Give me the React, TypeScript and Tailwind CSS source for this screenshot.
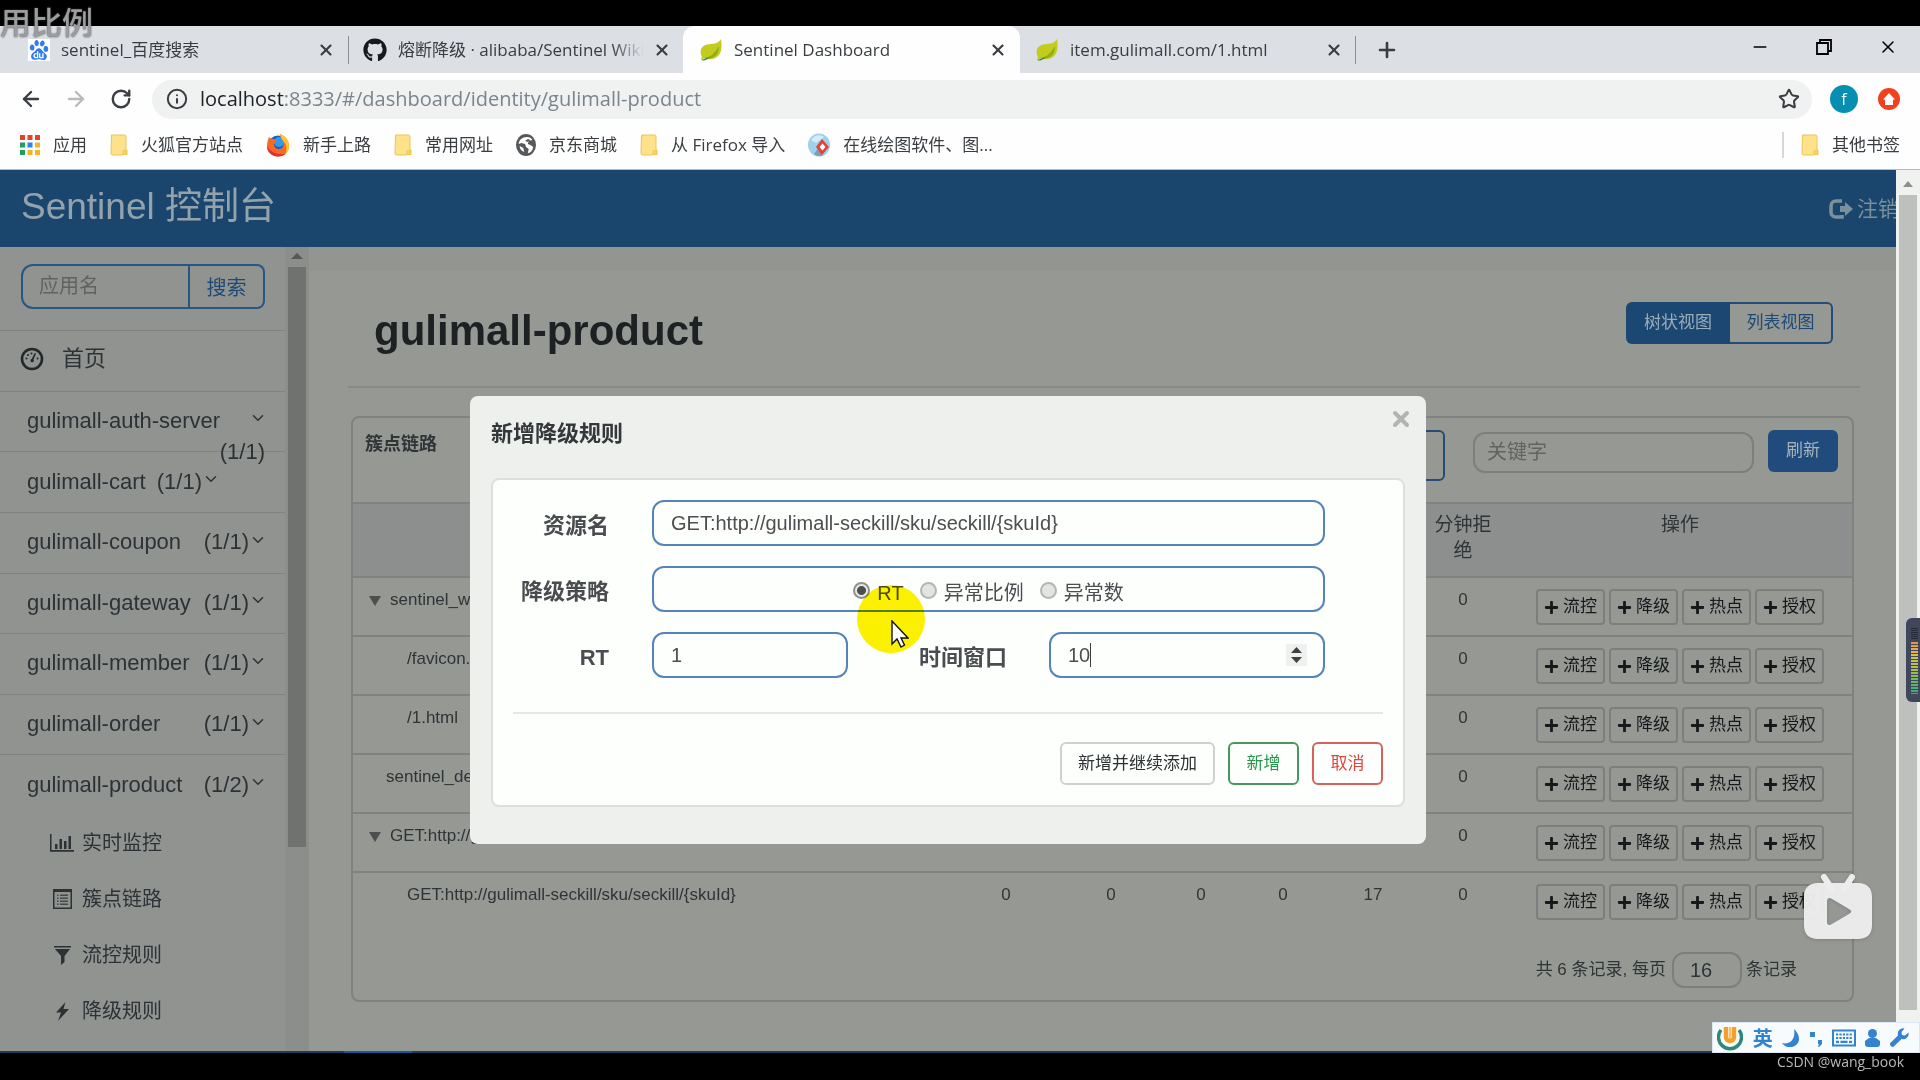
import type { ReactNode } from "react";
import { ArrowLeft, ArrowRight, ChevronDown, Info, Minus, Plus, RotateCw, Star, X } from "lucide-react";
import { FaGithub, FaPlus } from "react-icons/fa";
import { SiBaidu } from "react-icons/si";

const services = [
  { name: "gulimall-auth-server", count: "(1/1)" },
  { name: "gulimall-cart", count: "(1/1)" },
  { name: "gulimall-coupon", count: "(1/1)" },
  { name: "gulimall-gateway", count: "(1/1)" },
  { name: "gulimall-member", count: "(1/1)" },
  { name: "gulimall-order", count: "(1/1)" },
  { name: "gulimall-product", count: "(1/2)" },
];

const columns = [
  { label: "通过QPS", width: "w-[104px]" },
  { label: "拒绝QPS", width: "w-[106px]" },
  { label: "并发数", width: "w-[74px]" },
  { label: "平均RT", width: "w-[90px]" },
  { label: "分钟通过", width: "w-[90px]" },
  { label: "分钟拒绝", width: "w-[90px]" },
];

const resources = [
  { name: "sentinel_web_servlet_context", indent: "pl-4", open: true, values: [0, 0, 0, 0, 17, 0] },
  { name: "/favicon.ico", indent: "pl-[54px]", open: false, values: [0, 0, 0, 0, 0, 0] },
  { name: "/1.html", indent: "pl-[54px]", open: false, values: [0, 0, 0, 0, 0, 0] },
  { name: "sentinel_default_context", indent: "pl-[33px]", open: false, values: [0, 0, 0, 0, 0, 0] },
  { name: "GET:http://gulimall-seckill", indent: "pl-4", open: true, values: [0, 0, 0, 0, 17, 0] },
  { name: "GET:http://gulimall-seckill/sku/seckill/{skuId}", indent: "pl-[54px]", open: false, values: [0, 0, 0, 0, 17, 0] },
];

const actions = ["流控", "降级", "热点", "授权"];

const LeafIcon = () => (
  <svg className="h-6 w-6 shrink-0" viewBox="0 0 24 24">
    <path d="M22 1c1 7 1 13-3 17-4 4-10 4-14 2l-2 2-1-1 1-2C0 13 2 8 8 6.500c5-1 11 0 14-5.500z" fill="#c3cc1c" />
    <path d="M4 20C9 20 15 17 20 8c0 6-2 9-5 11-4 2-8 2-11 1z" fill="#8fae1b" />
    <path d="M2 22c4-1 6-2 9-3-3 3-6 4-9 3z" fill="#1f8a4c" />
  </svg>
);

const FolderIcon = () => (
  <svg className="h-6 w-[18px] shrink-0" viewBox="0 0 18 24">
    <path d="M1.500 2h13a1.500 1.500 0 011.500 1.500V17h1v4.500h-4V22H2.500A1.500 1.500 0 011 20.500z" fill="#fde28a" stroke="#ecc35a" />
    <path d="M13 17.500h3.500v4H13z" fill="#fbd64d" stroke="#ecc35a" strokeWidth=".7" />
  </svg>
);

const AppsIcon = () => (
  <svg className="h-5 w-5 shrink-0" viewBox="0 0 20 20">
    <path d="M0 0h5v5H0zM7.500 0h5v5h-5zM15 0h5v5h-5z" fill="#e8402f" />
    <path d="M0 7.500h5v5H0z" fill="#1fa05a" />
    <path d="M7.500 7.500h5v5h-5z" fill="#2f83ea" />
    <path d="M15 7.500h5v5h-5zM7.500 15h5v5h-5zM15 15h5v5h-5z" fill="#f5b324" />
    <path d="M0 15h5v5H0z" fill="#1fa05a" />
  </svg>
);

const FirefoxIcon = () => (
  <svg className="h-6 w-6 shrink-0" viewBox="0 0 24 24">
    <circle cx="12" cy="12.500" r="10" fill="#2559c4" />
    <circle cx="13" cy="9" r="5" fill="#2f9bea" />
    <path d="M3 4c1 1 2 2 4 2 2 0 3 1 3 2l-2 3c0 4 3 5 5 5 4 0 5-3 4-7-1-4-3-5-3-8 5 2 9 6 9 12 0 6-5 10.500-11 10.500S1 19 1 13c0-4 1-6 2-9z" fill="#fa6a1e" />
    <path d="M14 1c5 2 9 6 9 12 0 3-1 6-4 8 2-4 2-9-1-12-2-3-4-5-4-8z" fill="#fdc62e" />
    <path d="M1 13c0 6 5 10.500 11 10.500 3 0 6-1 8-3-6 2-15 0-19-7.500z" fill="#e22c3f" />
  </svg>
);

const GlobeIcon = () => (
  <svg className="h-[22px] w-5 shrink-0" viewBox="0 0 22 22" preserveAspectRatio="none">
    <circle cx="11" cy="11" r="11" fill="#55595c" />
    <path d="M12 3c3 0 5 1 6 3l-4 1-1 3 3 1 3 2c-1 4-3 6-6 6l1-4-3-2-1-3-4-1-3 1c0-4 4-7 9-7z" fill="#fff" />
    <path d="M13 5l3 1-3 2-3-1z" fill="#55595c" />
    <path d="M4 12l4 2 1 4c-3-1-5-3-5-6z" fill="#fff" />
  </svg>
);

const DrawIcon = () => (
  <svg className="h-6 w-[22px] shrink-0" viewBox="0 0 22 24">
    <ellipse cx="11" cy="12" rx="11" ry="11.500" fill="#9fd0ee" />
    <path d="M3 7c3-5 9-6 13-3L8 10z" fill="#d4ecfa" />
    <path d="M6 21l5-7 4 8c-3 2-7 1-9-1z" fill="#7b9db5" />
    <path d="M14 6l7 8-7 8-6-8z" fill="#e24238" />
    <path d="M14.500 10.500l3 3.500-3 3.500-3-3.500z" fill="#fff" />
  </svg>
);

const GaugeIcon = () => (
  <svg className="h-6 w-6 shrink-0" viewBox="0 0 24 24" fill="#23282a">
    <circle cx="12" cy="12" r="10" fill="none" stroke="#23282a" strokeWidth="2.600" />
    <path d="M14.800 6l1.200.5-2.500 6a1.700 1.700 0 11-1.800-.6z" />
    <circle cx="6.500" cy="11.500" r="1" />
    <circle cx="8" cy="8" r="1" />
    <circle cx="11.500" cy="6.500" r="1" />
    <circle cx="17.500" cy="11.500" r="1" />
  </svg>
);

const ChartIcon = () => (
  <svg className="h-[18px] w-6 shrink-0" viewBox="0 0 24 18" fill="#2c3133">
    <path d="M0 0h1.500v16H24v1.700H0zM5 10h2.500v5H5zM9.500 5H12v10H9.500zM14 7h2.500v8H14zM18.500 2H21v13h-2.500z" />
  </svg>
);

const ListIcon = () => (
  <svg className="h-5 w-[19px] shrink-0" viewBox="0 0 19 20" fill="#2c3133">
    <path d="M0 0h19v20H0zM1.500 3v15.500h16V3z" fillRule="evenodd" />
    <path d="M4 5.500h1.500V7H4zM7 5.500h8V7H7zM4 8.500h1.500V10H4zM7 8.500h8V10H7zM4 11.500h1.500V13H4zM7 11.500h8V13H7zM4 14.500h1.500V16H4zM7 14.500h8V16H7z" opacity=".75" />
  </svg>
);

const FilterIcon = () => (
  <svg className="h-[19px] w-[17px] shrink-0" viewBox="0 0 17 19" fill="#2c3133">
    <path d="M0 0h17v1.500H0zM1 3h15l-5.500 7v6L7 19v-9z" />
  </svg>
);

const FlashIcon = () => (
  <svg className="h-[19px] w-[17px] shrink-0" viewBox="0 0 17 19" fill="#2c3133">
    <path d="M11.500 0L2 10.500h5L4 19l11-12H9.500z" />
  </svg>
);

const LogoutIcon = () => (
  <svg className="h-5 w-6 shrink-0" viewBox="0 0 24 20">
    <path d="M13 2H7a5 5 0 00-5 5v6a5 5 0 005 5h6v-2" fill="none" stroke="currentColor" strokeWidth="3.600" />
    <path d="M16 3l8 7-8 7v-4h-5V7h5z" fill="currentColor" />
  </svg>
);

const menu = [
  { label: "实时监控", icon: <ChartIcon /> },
  { label: "簇点链路", icon: <ListIcon /> },
  { label: "流控规则", icon: <FilterIcon /> },
  { label: "降级规则", icon: <FlashIcon /> },
];

const bookmarks = [
  { label: "应用", icon: <AppsIcon /> },
  { label: "火狐官方站点", icon: <FolderIcon /> },
  { label: "新手上路", icon: <FirefoxIcon /> },
  { label: "常用网址", icon: <FolderIcon /> },
  { label: "京东商城", icon: <GlobeIcon /> },
  { label: "从 Firefox 导入", icon: <FolderIcon /> },
  { label: "在线绘图软件、图...", icon: <DrawIcon /> },
];

const Tab = ({ icon, title, className }: { icon: ReactNode; title: string; className: string }) => (
  <div className={`flex h-full items-center ${className}`}>
    {icon}
    <span className="ml-[11px] min-w-0 flex-1 overflow-hidden whitespace-nowrap text-[17px] leading-7 [mask-image:linear-gradient(to_right,#000_calc(100%-32px),transparent)]">
      {title}
    </span>
    <button aria-label="关闭标签页" className="ml-[9px] shrink-0">
      <X className="h-[18px] w-[18px]" strokeWidth={2.8} />
    </button>
  </div>
);

const Browser = () => (
  <header className="shrink-0 bg-[#fdfefd] font-['Open_Sans','Noto_Sans_CJK_SC',sans-serif] text-[#3a3e42]">
    <div className="flex h-[47px] items-center bg-[#dcdfe4]">
      <Tab
        className="w-[348px] pl-7 pr-[13px]"
        title="sentinel_百度搜索"
        icon={
          <span className="flex h-[22px] w-[22px] shrink-0 items-center justify-center bg-white">
            <SiBaidu className="h-5 w-5 text-[#2f7df0]" />
          </span>
        }
      />
      <div className="h-7 w-px bg-[#8d9094]" />
      <Tab
        className="w-[334px] pl-[14px] pr-3"
        title="熔断降级 · alibaba/Sentinel Wiki"
        icon={<FaGithub className="h-6 w-6 shrink-0 text-[#17191c]" />}
      />
      <Tab className="w-[337px] rounded-t-xl bg-[#fdfefd] pl-4 pr-[13px]" title="Sentinel Dashboard" icon={<LeafIcon />} />
      <Tab className="w-[335px] pl-[15px] pr-3" title="item.gulimall.com/1.html" icon={<LeafIcon />} />
      <div className="h-7 w-px bg-[#8d9094]" />
      <button aria-label="新标签页" className="ml-[19px]">
        <Plus className="h-6 w-6" strokeWidth={2.6} />
      </button>
      <div className="ml-auto flex items-center gap-[46px] pb-1.5 pr-[22px] text-black">
        <button aria-label="最小化"><Minus className="h-5 w-5" strokeWidth={1.8} /></button>
        <button aria-label="还原">
          <svg className="h-4 w-4" viewBox="0 0 16 16" fill="none" stroke="currentColor" strokeWidth="1.800">
            <path d="M1 4h11v11H1zM4 4V1h11v11h-3" />
          </svg>
        </button>
        <button aria-label="关闭"><X className="h-5 w-5" strokeWidth={1.8} /></button>
      </div>
    </div>
    <div className="flex h-[52px] items-center pl-[19px] pr-5">
      <button aria-label="后退"><ArrowLeft className="h-6 w-6" strokeWidth={2.4} /></button>
      <button aria-label="前进" className="ml-[21px] text-[#b9bbbd]"><ArrowRight className="h-6 w-6" strokeWidth={2.4} /></button>
      <button aria-label="刷新页面" className="ml-[22px]"><RotateCw className="h-[22px] w-[22px]" strokeWidth={2.6} /></button>
      <div className="ml-5 flex h-[39px] flex-1 items-center rounded-full bg-[#f0f2f2] pl-[14px] pr-3">
        <Info className="h-[22px] w-[22px]" strokeWidth={2.2} />
        <div className="ml-3 flex-1 text-xl leading-6 text-[#7a848c]">
          <span className="text-[#202428]">localhost</span>:8333/#/dashboard/identity/gulimall-product
        </div>
        <button aria-label="收藏"><Star className="h-[22px] w-[22px]" strokeWidth={2.2} /></button>
      </div>
      <button className="ml-[18px] h-7 w-7 rounded-full bg-[#078fb1] text-base leading-6 text-white">f</button>
      <button aria-label="更新" className="ml-5 flex h-[22px] w-[22px] items-center justify-center rounded-full bg-[#f0401c]">
        <svg className="h-3 w-3" viewBox="0 0 12 12"><path d="M6 0l6 6.500h-2V12H2V6.500H0z" fill="#fff" /></svg>
      </button>
    </div>
    <nav className="flex h-[45px] items-center gap-[23px] border-b border-[#b5babf] pb-1 pl-5 pr-5 text-[17px]">
      {bookmarks.map((item) => (
        <a key={item.label} href="#" className="flex items-center gap-[13px] whitespace-nowrap">
          {item.icon}
          {item.label}
        </a>
      ))}
      <a href="#" className="ml-auto flex items-center gap-[13px] border-l-2 border-[#d5d7da] pl-[17px]">
        <FolderIcon />
        其他书签
      </a>
    </nav>
  </header>
);

const Sidebar = () => (
  <aside className="flex w-[309px] shrink-0 overflow-hidden bg-[#919390]">
    <div className="w-[285px] text-[22px] text-[#2c3236]">
      <div className="flex h-[83px] items-start pl-[21px] pt-[17px]">
        <input
          aria-label="应用名"
          placeholder="应用名"
          className="h-[45px] w-[169px] rounded-l-xl border-2 border-[#285680] bg-transparent px-4 text-xl placeholder:text-[#5f6361]"
        />
        <button className="h-[45px] w-[75px] rounded-r-lg border-2 border-l-0 border-[#285680] pt-0.5 text-xl text-[#1d4a77]">搜索</button>
      </div>
      <ul className="grid h-[485px] grid-rows-8">
        <li className="border-t border-[#7f827f]">
          <a href="#" className="flex h-full items-center gap-[18px] pb-1 pl-5">
            <GaugeIcon />
            首页
          </a>
        </li>
        {services.map((service, index) => (
          <li key={service.name} className="border-t border-[#7f827f]">
            <a href="#" className={`relative flex h-full items-center pb-0.5 pl-[27px] ${index === 1 ? "w-[220px]" : "w-[267px]"}`}>
              {service.name}
              {/* the longest name pushes its count onto a second line */}
              <span className={index === 0 ? "absolute right-0.5 top-11 leading-8" : "ml-auto"}>{service.count}</span>
              <ChevronDown className={`mb-1 h-[18px] w-[18px] ${index === 0 ? "ml-auto" : ""}`} strokeWidth={2} />
            </a>
          </li>
        ))}
      </ul>
      <ul className="text-xl">
        {menu.map((item) => (
          <li key={item.label} className="h-14">
            <a href="#" className="flex h-full items-center gap-2 pl-[50px]">
              <span className="flex w-6 justify-center">{item.icon}</span>
              {item.label}
            </a>
          </li>
        ))}
      </ul>
    </div>
    <div className="flex w-6 flex-col items-center bg-[#8c8e8b] pt-[6px]">
      <svg className="h-[6px] w-3" viewBox="0 0 12 6"><path d="M6 0l6 6H0z" fill="#555856" /></svg>
      <div className="mt-2 h-[580px] w-[18px] bg-[#70726f]" />
    </div>
  </aside>
);

const ResourceTable = () => (
  <section className="rounded-lg border-2 border-[#7f827f]">
    <div className="flex h-[84px] items-start pl-3 pr-[14px] pt-3">
      <h2 className="mr-auto text-lg font-bold">簇点链路</h2>
      <select aria-label="机器" className="h-[51px] w-[300px] appearance-none rounded-md border-2 border-[#234c76]" />
      <input
        aria-label="关键字"
        placeholder="关键字"
        className="ml-7 mt-0.5 h-[41px] w-[281px] rounded-xl border-2 border-[#7c7f7d] px-3 text-xl placeholder:text-[#606462]"
      />
      <button className="ml-[14px] h-[42px] w-[70px] rounded-md bg-[#1f4c7c] text-[17px] text-[#a9b3bc]">刷新</button>
    </div>
    <table className="w-full table-fixed text-[17px] leading-[26px]">
      <thead>
        <tr className="h-[74px] border-y-2 border-[#7f827f] bg-[#8d8f8e] align-top text-[19px]">
          <th className="pt-2 font-normal">资源名</th>
          {columns.map((column) => (
            <th key={column.label} className={`px-4 pt-2 font-normal ${column.width}`}>{column.label}</th>
          ))}
          <th className="w-[344px] pt-2 font-normal">操作</th>
        </tr>
      </thead>
      <tbody>
        {resources.map((resource) => (
          <tr key={resource.name} className="h-[59px] border-t-2 border-[#7f827f] align-top">
            <td className={`pt-[9px] ${resource.indent}`}>
              {resource.open && (
                <svg className="mr-[9px] inline h-[10px] w-3" viewBox="0 0 12 10"><path d="M0 0h12L6 10z" fill="#4b4f4d" /></svg>
              )}
              {resource.name}
            </td>
            {resource.values.map((value, index) => (
              <td key={index} className="pt-[9px] text-center">{value}</td>
            ))}
            <td className="pt-[11px]">
              <div className="flex gap-1 pl-7">
                {actions.map((action) => (
                  <button key={action} className="flex h-9 w-[69px] items-center justify-center gap-1 rounded border-2 border-[#7c7f7d] text-[#15191b]">
                    <FaPlus className="h-[15px] w-[15px]" />
                    {action}
                  </button>
                ))}
              </div>
            </td>
          </tr>
        ))}
      </tbody>
    </table>
    <div className="flex h-[69px] items-start justify-end pr-[55px] pt-[21px] text-[17px] leading-9">
      <label htmlFor="page-size">共 6 条记录, 每页</label>
      <input id="page-size" defaultValue="16" className="ml-[6px] mr-1 h-9 w-[70px] rounded-xl border-2 border-[#7c7f7d] pl-4 text-xl" />
      条记录
    </div>
  </section>
);

const fieldClass = "h-[46px] rounded-xl border-2 border-[#5484b8] bg-transparent text-xl text-[#4c4f51]";
const labelClass = "pt-1 text-right text-[22px] font-bold text-[#4a4d4f]";

const RuleDialog = () => (
  <div className="absolute inset-0 flex items-start justify-center pt-[226px]">
    <form className="relative w-[956px] rounded-lg bg-[#eef0ee] px-[21px] pb-[37px] pt-[22px]" role="dialog" aria-labelledby="dialog-title">
      <h2 id="dialog-title" className="text-[22px] font-bold leading-8 text-[#34383a]">新增降级规则</h2>
      <button type="button" aria-label="关闭" className="absolute right-[13px] top-[11px] text-[#b2b4b2]">
        <X className="h-6 w-6" strokeWidth={4} />
      </button>
      <div className="mt-7 rounded-lg border-2 border-[#dddfdd] bg-[#fdfffd] p-5">
        <div className="grid gap-5 pr-[58px]">
          <div className="flex items-center">
            <label htmlFor="resource" className={`mr-[43px] w-[96px] ${labelClass}`}>资源名</label>
            <input id="resource" className={`min-w-0 flex-1 px-[17px] ${fieldClass}`} defaultValue="GET:http://gulimall-seckill/sku/seckill/{skuId}" />
          </div>
          <div className="flex items-center">
            <span className={`mr-[43px] w-[96px] ${labelClass}`}>降级策略</span>
            <div className={`flex flex-1 items-center justify-center gap-4 pt-2 ${fieldClass}`}>
              {["RT", "异常比例", "异常数"].map((label, index) => (
                <label key={label} className="flex items-center gap-[7px]">
                  <input
                    type="radio"
                    name="strategy"
                    defaultChecked={index === 0}
                    className="mb-1.5 h-[17px] w-[17px] appearance-none rounded-full border-2 border-[#b4b6b4] bg-[#e2e4e2] checked:border-[#8f9190] checked:bg-[radial-gradient(circle,#4d4f4e_0_4px,#e9ebe9_5px)]"
                  />
                  {label}
                </label>
              ))}
            </div>
          </div>
          <div className="flex items-center">
            <label htmlFor="rt" className={`mr-[43px] w-[96px] ${labelClass}`}>RT</label>
            <input id="rt" className={`w-[196px] px-[17px] ${fieldClass}`} defaultValue="1" />
            <label htmlFor="window" className={`ml-auto mr-[42px] ${labelClass}`}>时间窗口</label>
            <div className={`flex w-[276px] items-center pl-[17px] pr-4 ${fieldClass}`}>
              <input id="window" inputMode="numeric" className="field-sizing-content" defaultValue="10" />
              <span className="h-6 w-px bg-[#3a3d3f]" />
              <span className="ml-auto flex h-[22px] w-[21px] items-center justify-center bg-[#eff0ef]">
                <svg className="h-4 w-[11px]" viewBox="0 0 11 16"><path d="M5.500 0L11 6H0zM5.500 16L0 10h11z" fill="#3f4243" /></svg>
              </span>
            </div>
          </div>
        </div>
        <div className="mt-[34px] flex justify-end gap-[13px] border-t-2 border-[#e6e8e6] pt-7 text-[17px]">
          <button type="button" className="h-[43px] w-[155px] rounded-md border-2 border-[#cfd1cf] text-[#2d3133]">新增并继续添加</button>
          <button type="submit" className="h-[43px] w-[71px] rounded-md border-2 border-[#439a5c] text-[#27964a]">新增</button>
          <button type="button" className="h-[43px] w-[71px] rounded-md border-2 border-[#d9605d] text-[#dc4643]">取消</button>
        </div>
      </div>
    </form>
    {/* click highlight with the pointer */}
    <svg className="absolute left-[calc(50%-92px)] top-[414px] h-[70px] w-[70px] mix-blend-multiply" viewBox="0 0 70 70">
      <circle cx="35" cy="35" r="34" fill="#fdf000" />
    </svg>
    <svg className="absolute left-[calc(50%-57px)] top-[450px] h-7 w-[18px]" viewBox="0 0 18 28">
      <path d="M1 1v23l5-5 4 8 3.500-2-3.500-7h7z" fill="#fff" stroke="#111" strokeWidth="1.400" />
    </svg>
  </div>
);

const PageScrollbar = () => (
  <div className="relative flex w-6 shrink-0 flex-col items-center bg-[#f0f2f0] pt-[11px]">
    <svg className="h-[6px] w-[10px]" viewBox="0 0 10 6"><path d="M5 0l5 6H0z" fill="#8d8f8d" /></svg>
    <div className="mt-2 h-[815px] w-[18px] bg-[#bec0be]" />
    <div className="absolute right-0 top-[448px] flex h-[84px] w-[14px] flex-col gap-px rounded-l-md bg-[#41475a] pb-2 pl-[5px] pt-[10px]">
      {Array.from({ length: 6 }, (_, i) => <span key={i} className="h-px w-[7px] shrink-0 bg-[#252a36]" />)}
      <span className="mt-0.5 w-[7px] flex-1 bg-[repeating-linear-gradient(to_bottom,transparent_0_2px,#41475a_2px_3px),linear-gradient(to_bottom,#e8943c,#e0c04c_25%,#a5c04e_55%,#32a88c)]" />
    </div>
  </div>
);

const InputMethodBar = () => (
  <div className="absolute bottom-[27px] right-0 flex h-[31px] w-[208px] items-center justify-between border border-[#dbe7f2] bg-[#f8fbfe] pl-1 pr-[10px] text-[#3384d0]">
    <svg className="h-[26px] w-[26px]" viewBox="0 0 26 26" fill="none">
      <path d="M4 5a11.500 11.500 0 1018 0" stroke="#2c8a74" strokeWidth="3.500" />
      <path d="M9 2v10a4 4 0 008 0V2" stroke="#f5a02c" strokeWidth="4.500" />
      <path d="M13 2v12" stroke="#fcc25c" strokeWidth="2" />
    </svg>
    <span className="font-['Noto_Sans_CJK_SC',sans-serif] text-xl font-bold leading-6">英</span>
    <svg className="h-[18px] w-[18px]" viewBox="0 0 18 18" fill="currentColor"><path d="M12 0c7 6 7 16-2 18-4 1-8-1-10-4 7 2 14-3 12-14z" /></svg>
    <svg className="h-[18px] w-3" viewBox="0 0 12 18" fill="currentColor"><path d="M0 3h5v5H0zM8 11h4v4l-3 3H8l1-3H8z" /></svg>
    <svg className="h-[18px] w-6" viewBox="0 0 24 18" fill="none" stroke="currentColor">
      <path d="M1 1.500h22v15H1z" strokeWidth="2" />
      <path d="M4 5.500h16M4 9h16" strokeWidth="2.200" strokeDasharray="2.200 1.200" />
      <path d="M4 12.800h3M8.500 12.800h7M17 12.800h3" strokeWidth="2.200" />
    </svg>
    <svg className="h-[18px] w-[15px]" viewBox="0 0 15 18" fill="currentColor"><circle cx="7.500" cy="4.500" r="4.500" /><path d="M4 9h7l4 3v3c0 2-1 3-3 3H3c-2 0-3-1-3-3v-3z" /></svg>
    <svg className="h-[19px] w-[19px]" viewBox="0 0 19 19" fill="currentColor">
      <path d="M14.500.5a5.500 5.500 0 00-6.500 7L.8 14.500a2.300 2.300 0 003.500 3.500L11.500 11a5.500 5.500 0 007-6.500L15 7.500 12 7l-.5-3z" />
    </svg>
  </div>
);

const App = () => {
  return (
    <div className="relative flex h-screen flex-col overflow-hidden bg-black pb-[27px] pt-[26px] font-['Liberation_Sans','Noto_Sans_CJK_SC',sans-serif] text-[#2f3436]">
      <Browser />
      <div className="flex min-h-0 flex-1">
        <div className="relative flex min-w-0 flex-1 flex-col overflow-hidden bg-[#969894]">
          <header className="flex h-[77px] shrink-0 items-center justify-between overflow-hidden bg-[#1a466e] pb-1 pl-[21px] text-[#94a2ab]">
            <h1 className="text-[37px]">Sentinel 控制台</h1>
            <a href="#" className="-mr-[3px] flex items-center gap-1 whitespace-nowrap pt-1 text-[21px] text-[#7b909a]">
              <LogoutIcon />
              注销
            </a>
          </header>
          <div className="flex min-h-0 flex-1">
            <Sidebar />
            <main className="min-w-0 flex-1 overflow-hidden border-t-[24px] border-[#939591] pl-[39px] pr-9">
              <div className="flex h-[117px] items-start justify-between border-b-2 border-[#878a87] pl-[26px] pr-[27px]">
                <h2 className="pt-8 text-[42px] font-bold leading-[56px] text-[#1d2123]">gulimall-product</h2>
                <div className="mt-[31px] flex text-[17px]">
                  <button className="h-[42px] w-[104px] rounded-l-md bg-[#1a4873] text-[#9dacb7]">树状视图</button>
                  <button className="h-[42px] w-[103px] rounded-r-md border-2 border-l-0 border-[#234c76] text-[#1d4a77]">列表视图</button>
                </div>
              </div>
              <div className="ml-[3px] mr-[6px] mt-7">
                <ResourceTable />
              </div>
            </main>
          </div>
          <RuleDialog />
        </div>
        <PageScrollbar />
      </div>
      <div className="flex h-0.5 shrink-0 bg-[#1c3d5c] pl-[344px]">
        <div className="w-[68px] bg-[#145a9c]" />
      </div>
      <span className="absolute left-0 top-1.5 text-[31px] font-medium leading-9 text-[#9b9da0] [text-shadow:0_0_2px_#444]">用比例</span>
      <svg className="absolute bottom-[140px] right-12 h-[66px] w-[68px] drop-shadow" viewBox="0 0 68 66">
        <path d="M20 3l8 12M48 3l-8 12" stroke="#ececec" strokeWidth="6" strokeLinecap="round" />
        <path
          fillRule="evenodd"
          fill="#ececec"
          fillOpacity=".97"
          d="M14 9h40c9 0 14 5 14 14v28c0 9-5 14-14 14H14C5 65 0 60 0 51V23C0 14 5 9 14 9zM23 28v20c0 3 2 4 5 2l17-10c3-2 3-3 0-5L28 25c-3-2-5-1-5 3z"
        />
      </svg>
      <InputMethodBar />
      <span className="absolute bottom-1.5 right-4 font-['Open_Sans',sans-serif] text-sm leading-6 text-[#b9b9b9]">CSDN @wang_book</span>
    </div>
  );
};

export default App;
